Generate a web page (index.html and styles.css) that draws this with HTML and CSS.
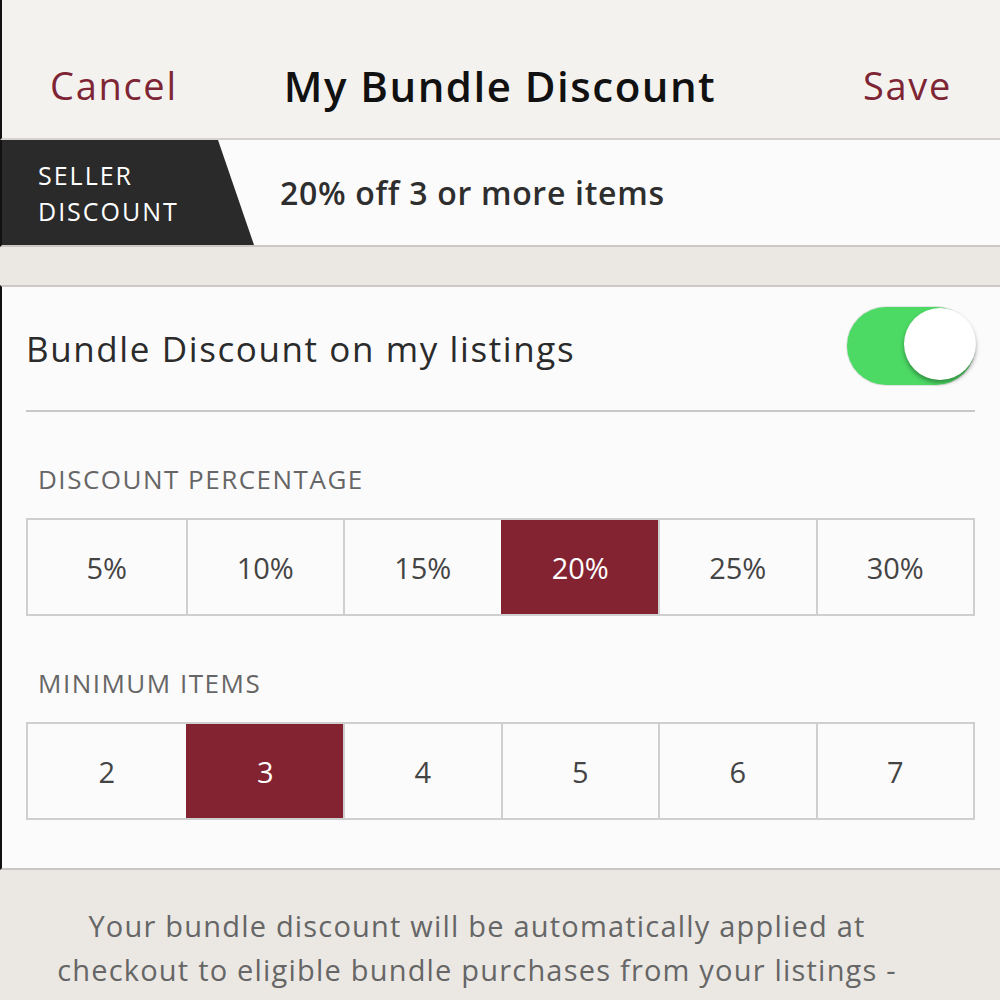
FILE: index.html
```html
<!DOCTYPE html>
<html>
<head>
<meta charset="utf-8">
<link rel="stylesheet" href="styles.css">
</head>
<body>
<div class="page">
  <header class="header">
    <span class="nav-btn left">Cancel</span>
    <h1 class="title">My Bundle Discount</h1>
    <span class="nav-btn right">Save</span>
  </header>
  <section class="seller">
    <div class="tag"><span>SELLER<br>DISCOUNT</span></div>
    <div class="summary">20% off 3 or more items</div>
  </section>
  <div class="gap"></div>
  <section class="panel">
    <div class="toggle-row">
      <span class="toggle-label">Bundle Discount on my listings</span>
      <span class="switch"><span class="knob"></span></span>
    </div>
    <div class="section-label">DISCOUNT PERCENTAGE</div>
    <div class="options">
      <div class="opt">5%</div>
      <div class="opt">10%</div>
      <div class="opt">15%</div>
      <div class="opt selected">20%</div>
      <div class="opt">25%</div>
      <div class="opt">30%</div>
    </div>
    <div class="section-label">MINIMUM ITEMS</div>
    <div class="options">
      <div class="opt">2</div>
      <div class="opt selected">3</div>
      <div class="opt">4</div>
      <div class="opt">5</div>
      <div class="opt">6</div>
      <div class="opt">7</div>
    </div>
  </section>
  <p class="note">Your bundle discount will be automatically applied at checkout to eligible bundle purchases from your listings - buyers will see the savings in their bundle.</p>
</div>
</body>
</html>
```
FILE: styles.css
```css
* { box-sizing: border-box; }
html, body { margin: 0; padding: 0; }
body {
  background: #ebe8e4;
  font-family: "Open Sans", Lato, sans-serif;
  color: #333;
  overflow: hidden;
  height: 1000px;
}
.page { width: 1000px; }
.header {
  height: 140px;
  background: #f4f2ef;
  border-left: 2px solid #111;
  border-bottom: 2px solid #d4d1ce;
  display: grid;
  grid-template-columns: 1fr auto 1fr;
  align-items: center;
  padding: 32px 50px 0 48px;
}
.nav-btn { font-size: 38px; color: #7e2535; letter-spacing: 1.7px; }
.nav-btn.right { justify-self: end; margin-right: -2px; }
.title {
  margin: 0;
  font-size: 42px;
  font-weight: 600;
  color: #111;
  letter-spacing: 1.5px;
}
.seller {
  height: 107px;
  background: #fcfbfb;
  border-left: 2px solid #111;
  border-bottom: 2px solid #cbc8c6;
  display: flex;
  align-items: stretch;
}
.tag {
  width: 252px;
  background: #2a2a2a;
  clip-path: polygon(0 0, 216px 0, 252px 100%, 0 100%);
  color: #fff;
  font-size: 25px;
  line-height: 36px;
  letter-spacing: 2px;
  display: flex;
  align-items: center;
  padding-left: 36px;
}
.summary {
  display: flex;
  align-items: center;
  padding-left: 26px;
  font-size: 32px;
  font-weight: 600;
  color: #2e2e2e;
  letter-spacing: 0.7px;
}
.gap { height: 38px; }
.panel {
  background: #fcfbfb;
  border-top: 2px solid #cbc8c6;
  border-bottom: 2px solid #c9c6c4;
  border-left: 2px solid #111;
  padding: 0 25px 48px 24px;
}
.toggle-row {
  height: 125px;
  display: flex;
  align-items: center;
  justify-content: space-between;
  border-bottom: 2px solid #c8c8c8;
}
.toggle-label { font-size: 35px; color: #2b2b2b; letter-spacing: 1.6px; }
.switch {
  position: relative;
  width: 128px;
  height: 78px;
  border-radius: 39px;
  background: #4cd964;
  box-shadow: 0 0 0 1px #e3e3e3;
  margin-top: -6px;
}
.knob {
  position: absolute;
  right: -1px;
  top: 1px;
  width: 72px;
  height: 72px;
  border-radius: 50%;
  background: #fff;
  box-shadow: 0 3px 4px rgba(0,0,0,0.35);
}
.section-label {
  font-size: 26px;
  line-height: 30px;
  color: #666;
  padding-left: 12px;
  margin: 52px 0 24px;
  letter-spacing: 1.5px;
}
.options {
  display: grid;
  grid-template-columns: repeat(6, 1fr);
  border: 2px solid #cfcfcf;
  height: 98px;
}
.opt {
  display: flex;
  align-items: center;
  justify-content: center;
  font-size: 29px;
  color: #444;
  border-left: 2px solid #cfcfcf;
}
.opt:first-child { border-left: none; }
.opt.selected { background: #832331; color: #fff; border-left-color: #832331; }
.note {
  margin: 0;
  padding: 34px 90px 0 44px;
  text-align: center;
  font-size: 29px;
  line-height: 44px;
  color: #666;
  letter-spacing: 1.2px;
}
```
